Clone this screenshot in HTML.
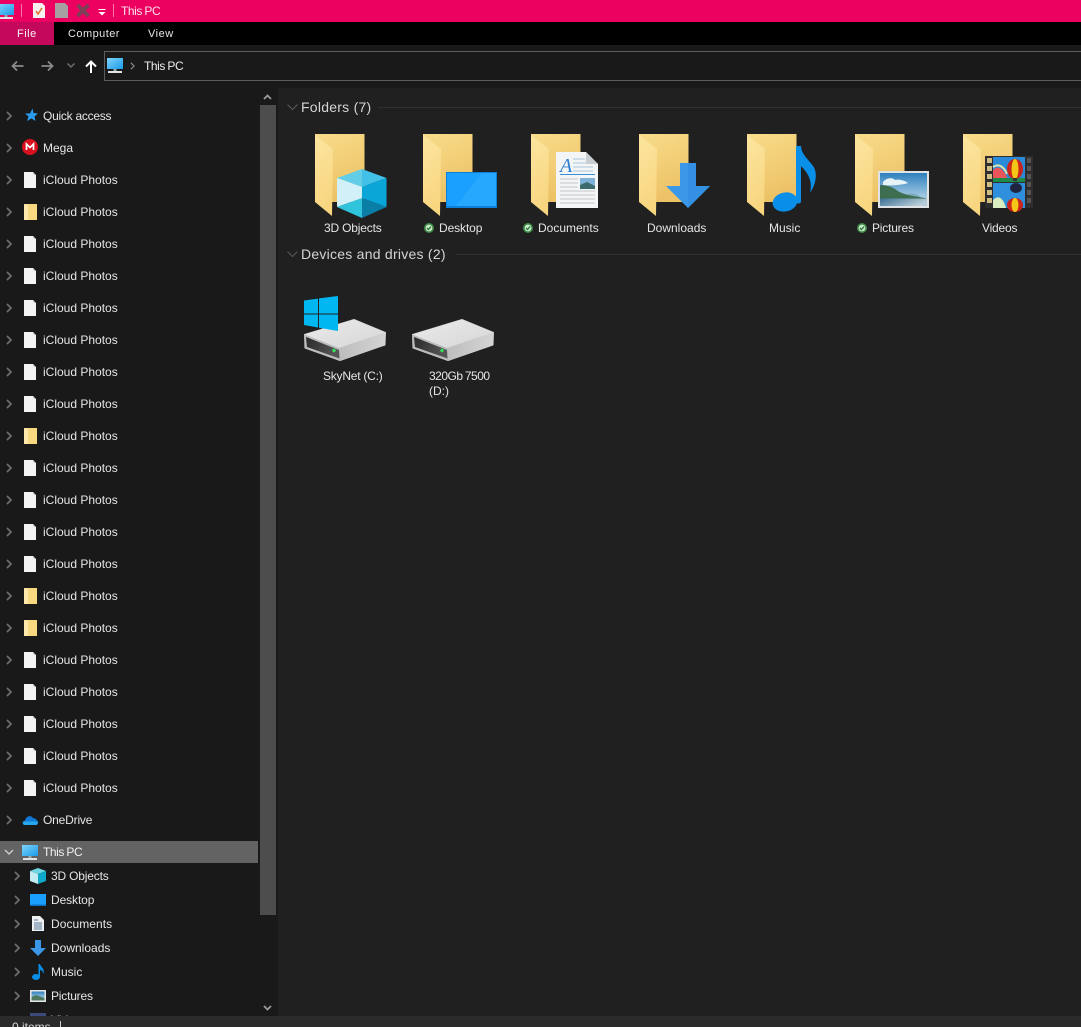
<!DOCTYPE html>
<html><head><meta charset="utf-8"><title>This PC</title>
<style>
html,body{margin:0;padding:0;width:1081px;height:1027px;overflow:hidden;background:#202020}
body{position:relative;font:12px "Liberation Sans",sans-serif;color:#e6e6e6;letter-spacing:0}
.a{position:absolute;white-space:nowrap}
.t{position:absolute;white-space:nowrap;line-height:16px;height:16px;margin-top:1px}
svg{position:absolute;overflow:visible}
</style></head><body>
<svg width="0" height="0" style="left:0;top:0">
<defs>
<linearGradient id="fb" x1="0" y1="0" x2="0.3" y2="1"><stop offset="0" stop-color="#f8dc8a"/><stop offset="1" stop-color="#edc266"/></linearGradient>
<linearGradient id="ff" x1="0" y1="0" x2="0.2" y2="1"><stop offset="0" stop-color="#fce5a0"/><stop offset="1" stop-color="#f8d67f"/></linearGradient>
<linearGradient id="dr" x1="0" y1="0" x2="1" y2="1"><stop offset="0" stop-color="#ebebeb"/><stop offset="1" stop-color="#d6d6d6"/></linearGradient>
<linearGradient id="drs" x1="0" y1="0" x2="1" y2="0"><stop offset="0" stop-color="#bdbdbd"/><stop offset="1" stop-color="#d4d4d4"/></linearGradient>
<linearGradient id="pan" x1="0" y1="0" x2="1" y2="0.3"><stop offset="0" stop-color="#2a2a2a"/><stop offset="1" stop-color="#555"/></linearGradient>
<linearGradient id="pcs" x1="0" y1="0" x2="1" y2="1"><stop offset="0" stop-color="#7fd4fb"/><stop offset="1" stop-color="#1b9be8"/></linearGradient>
<linearGradient id="sky" x1="0" y1="0" x2="0" y2="1"><stop offset="0" stop-color="#2f80bd"/><stop offset="1" stop-color="#cfe6f2"/></linearGradient>
<linearGradient id="wat" x1="0" y1="0" x2="1" y2="0.4"><stop offset="0" stop-color="#3a6f94"/><stop offset="1" stop-color="#b8cdd8"/></linearGradient>
<symbol id="folder" viewBox="0 0 50 82" width="50" height="82" overflow="visible">
<rect x="0" y="0" width="49.500" height="68" fill="url(#fb)"/>
<polygon points="0,1 18,15 17,82 0,68" fill="url(#ff)"/>
</symbol>
<symbol id="file" viewBox="0 0 12 16" width="12" height="16"><path d="M0 0H9L12 3V16H0Z" fill="#f4f4f4"/><path d="M9 0V3H12Z" fill="#cfcfcf"/></symbol>
<symbol id="sfolder" viewBox="0 0 13 16" width="13" height="16"><rect x="0" y="0" width="13" height="16" fill="#f8d97f"/><polygon points="0,0 4,1 4,16 0,16" fill="#fde9ad"/></symbol>
<symbol id="chev" viewBox="0 0 6 10" width="6" height="10"><path d="M1 1L5 5L1 9" fill="none" stroke="#6e6e6e" stroke-width="1.700"/></symbol>
<symbol id="pc" viewBox="0 0 16 16" width="16" height="16"><rect x="0" y="0" width="16" height="11" fill="url(#pcs)"/><rect x="6.500" y="11" width="3" height="2" fill="#9aa8b0"/><rect x="1" y="13" width="14" height="2" fill="#dfe5e8"/></symbol>
<symbol id="check" viewBox="0 0 10 10" width="10" height="10"><circle cx="5" cy="5" r="5" fill="#3f8a46"/><circle cx="5" cy="5" r="3.400" fill="#c9e8c9"/><path d="M3 5L4.500 6.500L7 3.600" fill="none" stroke="#2c7a34" stroke-width="1.300"/></symbol>
<symbol id="drive" viewBox="304 319 84 43" width="84" height="43" overflow="visible">
<path d="M304.500 334.500L354 319.500L385.500 332.500L385 345L340 360.500L305 348Z" fill="#cfcfcf" stroke="#cfcfcf" stroke-linejoin="round"/>
<polygon points="304.500,334.500 354,319.500 385.500,332.500 339,348" fill="url(#dr)"/>
<polygon points="339,348 385.500,332.500 385,345 340,361" fill="url(#drs)"/>
<polygon points="304.500,334.500 339,348 340,361 305,348" fill="#bbbbbb"/>
<polygon points="306,337 339,350 339.500,358.500 307,347" fill="url(#pan)"/>
<circle cx="334" cy="350.500" r="1.700" fill="#37e05a"/>
</symbol>
</defs></svg>

<!-- title bar -->
<div class="a" style="left:0;top:0;width:1081px;height:22px;background:#ec0060"></div>
<svg style="left:-2px;top:4px" width="16" height="16"><use href="#pc"/></svg>
<div class="a" style="left:21px;top:4px;width:1px;height:13px;background:#f37aa8"></div>
<svg style="left:33px;top:3px" width="12" height="15"><path d="M0 0H9L12 3V15H0Z" fill="#f7f0f0"/><path d="M3 8L5 11L9 5" fill="none" stroke="#e2702a" stroke-width="1.500"/></svg>
<svg style="left:55px;top:3px" width="13" height="15"><path d="M0 0H10L13 3V15H0Z" fill="#a6a0a2"/></svg>
<svg style="left:76px;top:4px" width="14" height="13"><path d="M1.500 1L12.500 12M12.500 1L1.500 12" stroke="#7d4056" stroke-width="3.800"/></svg>
<svg style="left:98px;top:9px" width="8" height="7"><path d="M0.500 0.500H7.500" stroke="#fff"/><path d="M0.500 3H7.500L4 6.500Z" fill="#fff"/></svg>
<div class="a" style="left:113px;top:4px;width:1px;height:13px;background:#f37aa8"></div>
<div class="t" style="left:121px;top:2px;color:#fbe3ec;letter-spacing:-.42px;word-spacing:-.5px">This PC</div>

<!-- menu -->
<div class="a" style="left:0;top:22px;width:1081px;height:23px;background:#000"></div>
<div class="a" style="left:0;top:22px;width:54px;height:23px;background:#c4085c"></div>
<div class="t" style="left:17px;top:26px;margin-top:0;color:#f5f5f5;font-size:11px;letter-spacing:.5px">File</div>
<div class="t" style="left:68px;top:26px;margin-top:0;color:#e6e6e6;font-size:11px;letter-spacing:.45px">Computer</div>
<div class="t" style="left:148px;top:26px;margin-top:0;color:#e6e6e6;font-size:11px;letter-spacing:.5px">View</div>

<!-- address -->
<div class="a" style="left:0;top:45px;width:1081px;height:43px;background:#191919"></div>
<svg style="left:11px;top:60px" width="13" height="12"><path d="M12.500 6H1.500M6 1.500L1.500 6L6 10.500" fill="none" stroke="#8a8a8a" stroke-width="1.800"/></svg>
<svg style="left:41px;top:60px" width="13" height="12"><path d="M0.500 6H11.500M7 1.500L11.500 6L7 10.500" fill="none" stroke="#8a8a8a" stroke-width="1.800"/></svg>
<svg style="left:67px;top:63px" width="8" height="6"><path d="M0.500 0.500L4 4L7.500 0.500" fill="none" stroke="#6e6e6e" stroke-width="1.500"/></svg>
<svg style="left:85px;top:60px" width="12" height="13"><path d="M6 13V1.500M1 6.500L6 1.500L11 6.500" fill="none" stroke="#fff" stroke-width="2"/></svg>
<div class="a" style="left:104px;top:51px;width:977px;height:28px;border:1px solid #5c5c5c;border-right:0;background:#191919"></div>
<svg style="left:107px;top:58px" width="16" height="16"><use href="#pc"/></svg>
<svg style="left:130px;top:62px" width="5" height="8" viewBox="0 0 6 10"><path d="M1 1L5 5L1 9" fill="none" stroke="#8a8a8a" stroke-width="1.500"/></svg>
<div class="t" style="left:144px;top:57px;color:#ececec;letter-spacing:-.42px;word-spacing:-.5px">This PC</div>

<!-- sidebar -->
<div class="a" style="left:0;top:88px;width:278px;height:928px;background:#191919"></div>
<div class="a" style="left:260px;top:105px;width:16px;height:810px;background:#4d4d4d"></div>
<svg style="left:263px;top:94px" width="9" height="6"><path d="M1 5L4.500 1.500L8 5" fill="none" stroke="#9a9a9a" stroke-width="1.800"/></svg>
<svg style="left:263px;top:1005px" width="9" height="6"><path d="M1 1L4.500 4.500L8 1" fill="none" stroke="#9a9a9a" stroke-width="1.800"/></svg>
<div class="a" style="left:0;top:841px;width:258px;height:22px;background:#636363"></div>

<svg style="left:6px;top:111px" width="6" height="10"><use href="#chev"/></svg>
<svg style="left:24px;top:108px" width="14" height="14" viewBox="0 0 14 14"><path d="M8.500 0.500L9.500 5L14 5.500L10.500 8.500L11.500 13L7.500 10.500L3 13L4.500 8.500L1 5.500H6Z" fill="#2a9bf0"/></svg>
<div class="t" style="left:43px;top:107px;letter-spacing:-.26px">Quick access</div>

<svg style="left:6px;top:143px" width="6" height="10"><use href="#chev"/></svg>
<svg style="left:22px;top:139px" width="16" height="16"><circle cx="8" cy="8" r="8" fill="#d9111e"/><path d="M4.500 11V5L8 8.500L11.500 5V11" fill="none" stroke="#fff" stroke-width="1.700"/></svg>
<div class="t" style="left:43px;top:139px">Mega</div>

<!-- iCloud rows -->
<svg style="left:6px;top:175px" width="6" height="10"><use href="#chev"/></svg><svg style="left:24px;top:172px" width="12" height="16"><use href="#file"/></svg><div class="t" style="left:43px;top:171px">iCloud Photos</div>
<svg style="left:6px;top:207px" width="6" height="10"><use href="#chev"/></svg><svg style="left:24px;top:204px" width="13" height="16"><use href="#sfolder"/></svg><div class="t" style="left:43px;top:203px">iCloud Photos</div>
<svg style="left:6px;top:239px" width="6" height="10"><use href="#chev"/></svg><svg style="left:24px;top:236px" width="12" height="16"><use href="#file"/></svg><div class="t" style="left:43px;top:235px">iCloud Photos</div>
<svg style="left:6px;top:271px" width="6" height="10"><use href="#chev"/></svg><svg style="left:24px;top:268px" width="12" height="16"><use href="#file"/></svg><div class="t" style="left:43px;top:267px">iCloud Photos</div>
<svg style="left:6px;top:303px" width="6" height="10"><use href="#chev"/></svg><svg style="left:24px;top:300px" width="12" height="16"><use href="#file"/></svg><div class="t" style="left:43px;top:299px">iCloud Photos</div>
<svg style="left:6px;top:335px" width="6" height="10"><use href="#chev"/></svg><svg style="left:24px;top:332px" width="12" height="16"><use href="#file"/></svg><div class="t" style="left:43px;top:331px">iCloud Photos</div>
<svg style="left:6px;top:367px" width="6" height="10"><use href="#chev"/></svg><svg style="left:24px;top:364px" width="12" height="16"><use href="#file"/></svg><div class="t" style="left:43px;top:363px">iCloud Photos</div>
<svg style="left:6px;top:399px" width="6" height="10"><use href="#chev"/></svg><svg style="left:24px;top:396px" width="12" height="16"><use href="#file"/></svg><div class="t" style="left:43px;top:395px">iCloud Photos</div>
<svg style="left:6px;top:431px" width="6" height="10"><use href="#chev"/></svg><svg style="left:24px;top:428px" width="13" height="16"><use href="#sfolder"/></svg><div class="t" style="left:43px;top:427px">iCloud Photos</div>
<svg style="left:6px;top:463px" width="6" height="10"><use href="#chev"/></svg><svg style="left:24px;top:460px" width="12" height="16"><use href="#file"/></svg><div class="t" style="left:43px;top:459px">iCloud Photos</div>
<svg style="left:6px;top:495px" width="6" height="10"><use href="#chev"/></svg><svg style="left:24px;top:492px" width="12" height="16"><use href="#file"/></svg><div class="t" style="left:43px;top:491px">iCloud Photos</div>
<svg style="left:6px;top:527px" width="6" height="10"><use href="#chev"/></svg><svg style="left:24px;top:524px" width="12" height="16"><use href="#file"/></svg><div class="t" style="left:43px;top:523px">iCloud Photos</div>
<svg style="left:6px;top:559px" width="6" height="10"><use href="#chev"/></svg><svg style="left:24px;top:556px" width="12" height="16"><use href="#file"/></svg><div class="t" style="left:43px;top:555px">iCloud Photos</div>
<svg style="left:6px;top:591px" width="6" height="10"><use href="#chev"/></svg><svg style="left:24px;top:588px" width="13" height="16"><use href="#sfolder"/></svg><div class="t" style="left:43px;top:587px">iCloud Photos</div>
<svg style="left:6px;top:623px" width="6" height="10"><use href="#chev"/></svg><svg style="left:24px;top:620px" width="13" height="16"><use href="#sfolder"/></svg><div class="t" style="left:43px;top:619px">iCloud Photos</div>
<svg style="left:6px;top:655px" width="6" height="10"><use href="#chev"/></svg><svg style="left:24px;top:652px" width="12" height="16"><use href="#file"/></svg><div class="t" style="left:43px;top:651px">iCloud Photos</div>
<svg style="left:6px;top:687px" width="6" height="10"><use href="#chev"/></svg><svg style="left:24px;top:684px" width="12" height="16"><use href="#file"/></svg><div class="t" style="left:43px;top:683px">iCloud Photos</div>
<svg style="left:6px;top:719px" width="6" height="10"><use href="#chev"/></svg><svg style="left:24px;top:716px" width="12" height="16"><use href="#file"/></svg><div class="t" style="left:43px;top:715px">iCloud Photos</div>
<svg style="left:6px;top:751px" width="6" height="10"><use href="#chev"/></svg><svg style="left:24px;top:748px" width="12" height="16"><use href="#file"/></svg><div class="t" style="left:43px;top:747px">iCloud Photos</div>
<svg style="left:6px;top:783px" width="6" height="10"><use href="#chev"/></svg><svg style="left:24px;top:780px" width="12" height="16"><use href="#file"/></svg><div class="t" style="left:43px;top:779px">iCloud Photos</div>

<svg style="left:6px;top:815px" width="6" height="10"><use href="#chev"/></svg>
<svg style="left:22px;top:814px" width="16" height="11" viewBox="0 0 16 11"><path d="M3 11C0 11 0 7 3 6.500C4 2 9 0.500 11 4C14 4 16 7 16 9C16 10 15 11 14 11Z" fill="#0f78d4"/><path d="M3 11C1 11 0 9 1.500 7.500H15.800C16 9.500 15 11 14 11Z" fill="#28a8ea"/></svg>
<div class="t" style="left:43px;top:811px;letter-spacing:-.18px">OneDrive</div>

<svg style="left:4px;top:849px" width="10" height="6"><path d="M1 1L5 5L9 1" fill="none" stroke="#c8c8c8" stroke-width="1.500"/></svg>
<svg style="left:22px;top:845px" width="16" height="16"><use href="#pc"/></svg>
<div class="t" style="left:43px;top:843px;color:#f0f0f0;letter-spacing:-.42px;word-spacing:-.5px">This PC</div>

<svg style="left:14px;top:871px" width="6" height="10"><use href="#chev"/></svg>
<svg style="left:30px;top:868px" width="16" height="16" viewBox="0 0 16 16"><polygon points="8,0 16,3 8,6 0,3" fill="#6fd6e3"/><polygon points="0,3 8,6 8,16 0,13" fill="#c5ecf3"/><polygon points="8,6 16,3 16,13 8,16" fill="#10a8c8"/></svg>
<div class="t" style="left:51px;top:867px;letter-spacing:-.18px">3D Objects</div>

<svg style="left:14px;top:895px" width="6" height="10"><use href="#chev"/></svg>
<svg style="left:30px;top:894px" width="16" height="12"><rect width="16" height="12" fill="#1a9fff"/><rect y="10.500" width="16" height="1.500" fill="#0c6fc0"/></svg>
<div class="t" style="left:51px;top:891px;letter-spacing:-.1px">Desktop</div>

<svg style="left:14px;top:919px" width="6" height="10"><use href="#chev"/></svg>
<svg style="left:32px;top:916px" width="12" height="15"><path d="M0 0H8L12 4V15H0Z" fill="#eef0f2"/><path d="M2 7H10M2 9H10M2 11H10M2 13H10M2 4H6" stroke="#56789a"/></svg>
<div class="t" style="left:51px;top:915px;letter-spacing:.05px">Documents</div>

<svg style="left:14px;top:943px" width="6" height="10"><use href="#chev"/></svg>
<svg style="left:30px;top:940px" width="16" height="16"><polygon points="5,0 11,0 11,8 16,8 8,16 0,8 5,8" fill="#3b96e8"/></svg>
<div class="t" style="left:51px;top:939px">Downloads</div>

<svg style="left:14px;top:967px" width="6" height="10"><use href="#chev"/></svg>
<svg style="left:32px;top:964px" width="13" height="16" viewBox="0 0 13 16"><ellipse cx="4" cy="13" rx="4" ry="3" fill="#0a8fe8"/><path d="M6.500 13V0H8C8.500 3 13 4 11.500 10C11 7 9 6 8 6V13Z" fill="#0a8fe8"/></svg>
<div class="t" style="left:51px;top:963px">Music</div>

<svg style="left:14px;top:991px" width="6" height="10"><use href="#chev"/></svg>
<svg style="left:30px;top:990px" width="16" height="12"><rect width="16" height="12" fill="#e8e8e8"/><rect x="1.500" y="1.500" width="13" height="9" fill="url(#sky)"/><path d="M1.500 7L6 5L14.500 8V10.500H1.500Z" fill="#4d7a5e"/></svg>
<div class="t" style="left:51px;top:987px;letter-spacing:-.2px">Pictures</div>
<svg style="left:30px;top:1013px" width="16" height="3"><rect width="16" height="3" fill="#3c4a7a"/></svg>
<div class="t" style="left:51px;top:1011px;height:4px;overflow:hidden">Videos</div>

<!-- status -->
<div class="a" style="left:0;top:1016px;width:1081px;height:11px;background:#2b2b2b"></div>
<div class="t" style="left:12px;top:1018px;color:#d8d8d8">0 items</div>
<div class="a" style="left:60px;top:1021px;width:1px;height:6px;background:#cfcfcf"></div>

<!-- section headers -->
<svg style="left:287px;top:104px" width="11" height="7"><path d="M0.500 0.500L5.500 5.500L10.500 0.500" fill="none" stroke="#5a5a5a"/></svg>
<div class="t" style="left:301px;top:98px;margin-top:0;font-size:14px;height:18px;line-height:18px;color:#d4d4d4;letter-spacing:.25px">Folders (7)</div>
<div class="a" style="left:378px;top:107px;width:703px;height:1px;background:#303030"></div>
<svg style="left:287px;top:251px" width="11" height="7"><path d="M0.500 0.500L5.500 5.500L10.500 0.500" fill="none" stroke="#5a5a5a"/></svg>
<div class="t" style="left:301px;top:245px;margin-top:0;font-size:14px;height:18px;line-height:18px;color:#d4d4d4;letter-spacing:.25px">Devices and drives (2)</div>
<div class="a" style="left:455px;top:254px;width:626px;height:1px;background:#303030"></div>

<!-- folders -->
<svg style="left:315px;top:134px" width="50" height="82"><use href="#folder"/></svg>
<svg style="left:423px;top:134px" width="50" height="82"><use href="#folder"/></svg>
<svg style="left:531px;top:134px" width="50" height="82"><use href="#folder"/></svg>
<svg style="left:639px;top:134px" width="50" height="82"><use href="#folder"/></svg>
<svg style="left:747px;top:134px" width="50" height="82"><use href="#folder"/></svg>
<svg style="left:855px;top:134px" width="50" height="82"><use href="#folder"/></svg>
<svg style="left:963px;top:134px" width="50" height="82"><use href="#folder"/></svg>

<!-- 3D cube -->
<svg style="left:337px;top:169px" width="50" height="49" viewBox="337 169 50 49">
<polygon points="337,178 362,169 362,187" fill="#62cde6"/>
<polygon points="362,169 386.500,178 362,187" fill="#43c0e8"/>
<polygon points="337,178 362,187 362,198 337,207" fill="#d2f0f7"/>
<polygon points="362,187 386.500,178 386.500,207 362,198" fill="#0aa6d8"/>
<polygon points="337,207 362,198 362,218" fill="#2fc3dc"/>
<polygon points="362,198 386.500,207 362,218" fill="#0a7ea6"/>
</svg>

<!-- desktop -->
<svg style="left:446px;top:172px" width="51" height="36"><rect width="51" height="36" fill="#0c7fd8"/><rect x="1" y="1" width="49" height="33" fill="#1aa0ff"/><polygon points="10,34 36,1 50,1 50,34" fill="#26a8ff"/></svg>

<!-- document -->
<svg style="left:556px;top:152px" width="42" height="56" viewBox="0 0 42 56">
<path d="M0 0H30L42 12V56H0Z" fill="#f4f5f6"/>
<path d="M30 0V12H42Z" fill="#c9ced3"/>
<text x="4" y="20" font-family="Liberation Serif,serif" font-style="italic" font-size="20" fill="#2a7fd0">A</text>
<path d="M17 7H29M17 11H30M17 15H37M17 19H37" stroke="#a9c6de" stroke-width="1"/>
<path d="M4 22.500H39" stroke="#3a8ed6" stroke-width="1"/>
<path d="M4 27H22M4 31H22M4 35H22M4 39H39M4 43H39M4 47H39M4 51H39" stroke="#bfc6cc"/>
<rect x="24" y="26" width="15" height="11" fill="#7fb2d8"/>
<path d="M24 33L31 30L39 34V37H24Z" fill="#3d6b6e"/>
</svg>

<!-- downloads arrow -->
<svg style="left:666px;top:163px" width="44" height="45"><polygon points="14,0 30,0 30,23 44,23 22,45 0,23 14,23" fill="#3b98e8"/><polygon points="22,0 30,0 30,23 44,23 22,45" fill="#3390e2"/></svg>

<!-- music note -->
<svg style="left:773px;top:146px" width="44" height="68" viewBox="0 0 44 68">
<ellipse cx="12" cy="56" rx="12.500" ry="9.500" fill="#0a8fe8" transform="rotate(-12 12 56)"/>
<path d="M23 56V0H28C28 8 36 14 40 20C45 27 43 38 37 47C39 38 38 30 28 20V56C27 58 24 58 23 56Z" fill="#0a8fe8"/>
</svg>

<!-- picture -->
<svg style="left:878px;top:171px" width="51" height="37" viewBox="0 0 51 37">
<rect width="51" height="37" fill="#dfe3e6"/>
<rect x="2" y="2" width="47" height="33" fill="url(#sky)"/>
<path d="M5 11C8 7 14 6 17 9C21 8 26 9 30 12C25 14 10 15 5 14Z" fill="#e8f3f8"/>
<path d="M28 24C33 21 38 22 44 27H28Z" fill="#7aa8b8"/>
<path d="M2 14C7 14 12 15 17 18C22 22 30 25 48 27V28H2Z" fill="#3d6e50"/>
<rect x="2" y="27.500" width="47" height="7.500" fill="url(#wat)"/>
</svg>

<!-- video -->
<svg style="left:985px;top:156px" width="48" height="52" viewBox="0 0 48 52">
<rect width="48" height="52" fill="#2e2e2e"/>
<rect x="2" y="2" width="5" height="5" fill="#cfbb85"/><rect x="2" y="10" width="5" height="5" fill="#cfbb85"/><rect x="2" y="18" width="5" height="5" fill="#cfbb85"/><rect x="2" y="26" width="5" height="5" fill="#cfbb85"/><rect x="2" y="34" width="5" height="5" fill="#cfbb85"/><rect x="2" y="42" width="5" height="5" fill="#cfbb85"/>
<rect x="42" y="2" width="4" height="5" fill="#555"/><rect x="42" y="10" width="4" height="5" fill="#555"/><rect x="42" y="18" width="4" height="5" fill="#555"/><rect x="42" y="26" width="4" height="5" fill="#555"/><rect x="42" y="34" width="4" height="5" fill="#555"/><rect x="42" y="42" width="4" height="5" fill="#555"/>
<rect x="8" y="1" width="32" height="25" fill="#2a8ad8"/>
<rect x="8" y="27" width="32" height="25" fill="#2f8fdc"/>
<path d="M8 14C14 8 19 14 23 23H8Z" fill="#e8555a"/>
<path d="M8 11C14 7 19 11 22 18" fill="none" stroke="#d8e8b0" stroke-width="2"/>
<rect x="8" y="22" width="32" height="4" fill="#1d8a4a"/>
<ellipse cx="30" cy="13" rx="8" ry="10" fill="#c9241c"/><ellipse cx="30" cy="13" rx="3.500" ry="10" fill="#f5c518"/>
<rect x="28" y="22" width="4" height="3" fill="#333"/>
<ellipse cx="31" cy="32" rx="6" ry="5" fill="#1f2540"/>
<ellipse cx="30" cy="49" rx="8" ry="7" fill="#c9241c"/><ellipse cx="30" cy="49" rx="3.500" ry="7" fill="#f5c518"/>
<path d="M8 44C13 39 18 41 21 52H8Z" fill="#d9edc0"/>
</svg>

<!-- labels -->
<div class="t" style="left:324px;top:219px;letter-spacing:-.18px">3D Objects</div>
<svg style="left:424px;top:223px" width="10" height="10"><use href="#check"/></svg>
<div class="t" style="left:439px;top:219px;letter-spacing:-.1px">Desktop</div>
<svg style="left:523px;top:223px" width="10" height="10"><use href="#check"/></svg>
<div class="t" style="left:538px;top:219px">Documents</div>
<div class="t" style="left:647px;top:219px">Downloads</div>
<div class="t" style="left:769px;top:219px">Music</div>
<svg style="left:857px;top:223px" width="10" height="10"><use href="#check"/></svg>
<div class="t" style="left:872px;top:219px;letter-spacing:-.2px">Pictures</div>
<div class="t" style="left:982px;top:219px;letter-spacing:-.2px">Videos</div>

<!-- drives -->
<svg style="left:304px;top:319px" width="84" height="43"><use href="#drive"/></svg>
<svg style="left:412px;top:319px" width="84" height="43"><use href="#drive"/></svg>
<svg style="left:304px;top:296px" width="35" height="35" viewBox="0 0 35 35">
<polygon points="0,4.500 14,2.600 14,17.500 0,17.500" fill="#00b7f1"/>
<polygon points="15,2.400 34,0 34,17.500 15,17.500" fill="#00b7f1"/>
<polygon points="0,18.500 14,18.500 14,31.500 0,29" fill="#00b7f1"/>
<polygon points="15,18.500 34,18.500 34,35 15,31.800" fill="#00b7f1"/>
</svg>
<div class="t" style="left:323px;top:367px;letter-spacing:-.23px">SkyNet (C:)</div>
<div class="t" style="left:429px;top:367px;letter-spacing:-.5px;word-spacing:-.5px">320Gb 7500</div>
<div class="t" style="left:429px;top:382px">(D:)</div>
</body></html>
